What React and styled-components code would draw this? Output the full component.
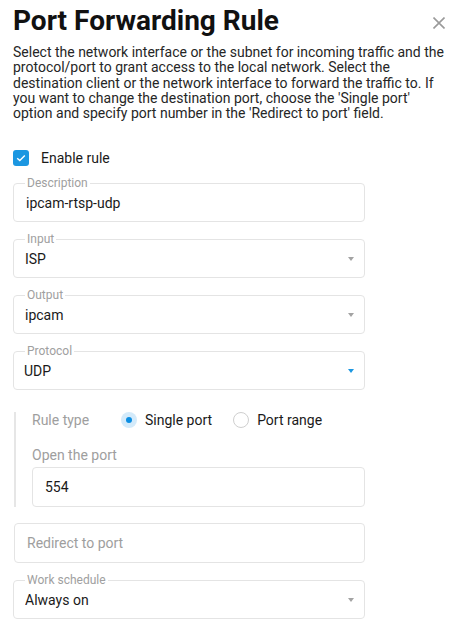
import React from 'react';
import styled, { createGlobalStyle } from 'styled-components';

const GlobalStyle = createGlobalStyle`
  body {
    margin: 0;
    background: #fff;
    font-family: Roboto, "Liberation Sans", Arial, sans-serif;
    color: #212121;
  }
  * { box-sizing: border-box; }
`;

const Page = styled.div`
  padding: 5px 12px 0 13px;
`;

const Header = styled.div`
  display: flex;
  justify-content: space-between;
  align-items: flex-start;
`;

const Title = styled.h1`
  margin: 0;
  font-size: 28px;
  line-height: 32px;
  font-weight: 700;
  color: #111;
`;

const CloseButton = styled.button`
  border: none;
  background: none;
  padding: 0;
  margin-top: 12px;
  width: 12px;
  height: 12px;
  display: flex;
  cursor: pointer;
`;

const Intro = styled.p`
  margin: 8px 0 0;
  font-size: 14px;
  line-height: 15.25px;
  color: #262626;
`;

const Form = styled.div`
  width: 352px;
  display: flex;
  flex-direction: column;
`;

const CheckRow = styled.label`
  display: flex;
  align-items: center;
  gap: 12px;
  height: 20px;
  margin-top: 27px;
  font-size: 14px;
  color: #1a1a1a;
`;

const CheckBox = styled.span`
  width: 16px;
  height: 16px;
  border-radius: 3px;
  background: #1c97e1;
  display: flex;
  align-items: center;
  justify-content: center;
`;

const Field = styled.fieldset`
  margin: ${p => p.$gap}px 0 0;
  padding: 0;
  min-width: 0;
  border: 1px solid #e4e4e4;
  border-radius: 4px;
`;

const Legend = styled.legend`
  margin-left: 11px;
  padding: 0 2px;
  font-size: 12px;
  line-height: 12px;
  color: #a0a0a0;
`;

const ValueRow = styled.div`
  display: flex;
  align-items: center;
  height: 32px;
  padding: 0 10px 8px ${p => p.$indent}px;
  padding-top: 4px;
`;

const ValueInput = styled.input`
  flex: 1;
  min-width: 0;
  border: none;
  outline: none;
  padding: 0;
  background: none;
  font: inherit;
  font-size: 14px;
  line-height: 20px;
  color: #1a1a1a;
`;

const Arrow = styled.span`
  width: 0;
  height: 0;
  border-left: 3.5px solid transparent;
  border-right: 3.5px solid transparent;
  border-top: 4px solid ${p => (p.$active ? '#1c97e1' : '#a3a3a3')};
  margin-left: 8px;
`;

const RuleGroup = styled.div`
  margin-top: 22px;
  margin-left: 1px;
  border-left: 2px solid #e6e6e6;
  padding-left: 16px;
  display: flex;
  flex-direction: column;
`;

const RadioRow = styled.div`
  display: flex;
  align-items: center;
  height: 16px;
  font-size: 14px;
`;

const MutedLabel = styled.span`
  font-size: 14px;
  line-height: 16px;
  color: #9e9e9e;
  width: ${p => (p.$width ? `${p.$width}px` : 'auto')};
  margin-top: ${p => p.$top || 0}px;
`;

const RadioOption = styled.label`
  display: flex;
  align-items: center;
  gap: 8px;
  margin-right: 21px;
  color: #1a1a1a;
`;

const RadioCircle = styled.span`
  width: 16px;
  height: 16px;
  border-radius: 50%;
  display: flex;
  align-items: center;
  justify-content: center;
  background: ${p => (p.$checked ? '#d3eafa' : '#fff')};
  border: ${p => (p.$checked ? 'none' : '1px solid #cfcfcf')};

  &::after {
    content: '';
    display: ${p => (p.$checked ? 'block' : 'none')};
    width: 6px;
    height: 6px;
    border-radius: 50%;
    background: #0b8ee2;
  }
`;

const BoxInput = styled.input`
  width: 100%;
  height: 40px;
  margin-top: ${p => p.$gap}px;
  border: 1px solid #e4e4e4;
  border-radius: 4px;
  padding: 0 12px 0 ${p => p.$indent}px;
  outline: none;
  font: inherit;
  font-size: 14px;
  color: #1a1a1a;

  &::placeholder {
    color: #9e9e9e;
  }
`;

const Shifted = styled.div`
  margin-left: 1px;
`;

function SelectField({ label, value, gap, indent = 11, active }) {
  return (
    <Field $gap={gap}>
      <Legend>{label}</Legend>
      <ValueRow $indent={indent}>
        <ValueInput readOnly value={value} />
        <Arrow $active={active} />
      </ValueRow>
    </Field>
  );
}

export default function App() {
  return (
    <Page>
      <GlobalStyle />
      <Header>
        <Title>Port Forwarding Rule</Title>
        <CloseButton aria-label="Close">
          <svg width="12" height="12" viewBox="0 0 12 12">
            <path d="M0.5 0.5 L11.5 11.5 M11.5 0.5 L0.5 11.5" stroke="#9a9a9a" strokeWidth="1.6" />
          </svg>
        </CloseButton>
      </Header>
      <Intro>
        Select the network interface or the subnet for incoming traffic and the
        protocol/port to grant access to the local network. Select the destination
        client or the network interface to forward the traffic to. If you want to
        change the destination port, choose the 'Single port' option and specify
        port number in the 'Redirect to port' field.
      </Intro>
      <Form>
        <CheckRow>
          <CheckBox>
            <svg width="10" height="8" viewBox="0 0 10 8">
              <path d="M1.2 4.2 L3.8 6.6 L8.8 1.4" fill="none" stroke="#fff" strokeWidth="1.4" />
            </svg>
          </CheckBox>
          Enable rule
        </CheckRow>

        <Field $gap={9}>
          <Legend>Description</Legend>
          <ValueRow $indent={12}>
            <ValueInput defaultValue="ipcam-rtsp-udp" />
          </ValueRow>
        </Field>

        <SelectField label="Input" value="ISP" gap={11} />
        <SelectField label="Output" value="ipcam" gap={11} />
        <SelectField label="Protocol" value="UDP" gap={11} indent={10} active />

        <RuleGroup>
          <RadioRow>
            <MutedLabel $width={89}>Rule type</MutedLabel>
            <RadioOption>
              <RadioCircle $checked />
              Single port
            </RadioOption>
            <RadioOption>
              <RadioCircle />
              Port range
            </RadioOption>
          </RadioRow>
          <MutedLabel $top={19}>Open the port</MutedLabel>
          <BoxInput $gap={4} $indent={12} defaultValue="554" />
        </RuleGroup>

        <Shifted>
          <BoxInput $gap={16} $indent={12} placeholder="Redirect to port" />
        </Shifted>

        <SelectField label="Work schedule" value="Always on" gap={11} />
      </Form>
    </Page>
  );
}
